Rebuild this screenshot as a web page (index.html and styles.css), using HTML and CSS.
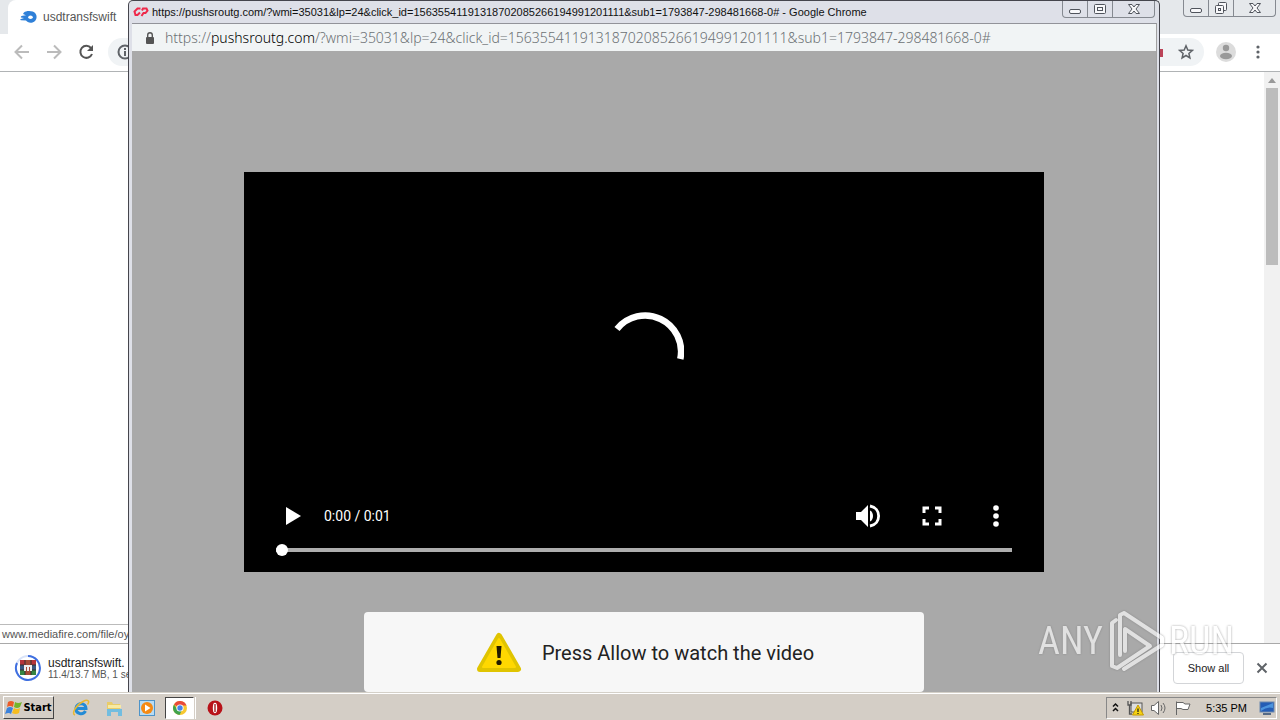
FILE: index.html
```html
<!DOCTYPE html>
<html lang="en">
<head>
<meta charset="utf-8">
<title>Desktop</title>
<link rel="stylesheet" href="styles.css">
</head>
<body>
<div class="desktop">
  <div class="stage">
    <main class="browser">
      <div class="tabstrip">
        <div class="tab">
          <svg width="17" height="14" viewBox="0 0 17 14"><path d="M4 2.500C6 0.500 13 0.300 15.500 3.500C18 7 16 11.500 12.500 12.500C9.500 13.300 7 12 6 10.500L1 10.300C0 10 0 9.200 1 9L4 8L1 7.600C0.500 7 1 6 2.500 5.800L6 5.300L3.500 4.300C3 4 3 3.300 4 2.500Z" fill="#2f80d8"/><ellipse cx="10.500" cy="7.200" rx="2.300" ry="1.800" fill="#fff"/></svg>
          <span>usdtransfswift</span>
        </div>
        <div class="winbtns main-btns">
          <button aria-label="Minimize"><svg width="14" height="14" viewBox="0 0 14 14"><rect x="1.500" y="7.500" width="11" height="4" rx="1.500"/></svg></button>
          <button aria-label="Restore"><svg width="14" height="14" viewBox="0 0 14 14"><rect x="4.500" y="1.500" width="8" height="8" rx="1"/><rect x="1.500" y="4.500" width="8" height="8" rx="1"/><rect x="4.500" y="7.500" width="2" height="2"/></svg></button>
          <button class="wide" aria-label="Close"><svg width="14" height="14" viewBox="0 0 14 14"><path d="M1.500 2.500H5L7 5L9 2.500H12.500L9 7L12.500 11.500H9L7 9L5 11.500H1.500L5 7Z"/></svg></button>
        </div>
      </div>
      <div class="toolbar">
        <button class="icon" aria-label="Back"><svg width="16" height="16" viewBox="0 0 16 16" fill="none" stroke="#bbb" stroke-width="2"><path d="M15 8H2M8 1.500L1.500 8L8 14.500"/></svg></button>
        <button class="icon" aria-label="Forward"><svg width="16" height="16" viewBox="0 0 16 16" fill="none" stroke="#bbb" stroke-width="2"><path d="M1 8H14M8 1.500L14.500 8L8 14.500"/></svg></button>
        <button class="icon" aria-label="Reload"><svg width="16" height="16" viewBox="0 0 16 16"><path d="M13 4A6 6 0 1 0 14 10" fill="none" stroke="#555" stroke-width="2"/><path d="M15 1V7H9Z" fill="#555"/></svg></button>
        <div class="omnibox">
          <svg width="16" height="16" viewBox="0 0 16 16" fill="none" stroke="#5f6368" stroke-width="2"><circle cx="8" cy="8" r="6.500"/><path d="M8 7V12M8 4V6"/></svg>
          <span class="blocked"></span>
          <button class="icon" aria-label="Bookmark this page"><svg width="16" height="16" viewBox="0 0 16 16"><path d="M8 1.800L9.800 6L14.300 6.400L10.900 9.400L11.900 13.900L8 11.500L4.100 13.900L5.100 9.400L1.700 6.400L6.200 6Z" fill="none" stroke="#5f6368" stroke-width="1.500"/></svg></button>
        </div>
        <button class="icon avatar" aria-label="Profile"><svg width="20" height="20" viewBox="0 0 20 20"><circle cx="10" cy="10" r="10" fill="#dcdcdc"/><circle cx="10" cy="6" r="3.200" fill="#999"/><ellipse cx="10" cy="14" rx="6" ry="3.300" fill="#999"/></svg></button>
        <button class="icon" aria-label="Menu"><svg width="16" height="16" viewBox="0 0 16 16" fill="#5f6368"><circle cx="8" cy="3" r="1.600"/><circle cx="8" cy="8" r="1.600"/><circle cx="8" cy="13" r="1.600"/></svg></button>
      </div>
      <div class="page">
        <div class="scrollbar"><svg width="16" height="16" viewBox="0 0 16 16"><path d="M4 11L8 6L12 11Z" fill="#999"/></svg><div class="thumb"></div></div>
        <div class="status">www.mediafire.com/file/oy</div>
      </div>
      <div class="downloads">
        <svg width="28" height="28" viewBox="0 0 28 28"><circle cx="14" cy="14" r="12" fill="none" stroke="#d9e3f8" stroke-width="2"/><path d="M14 2A12 12 0 1 1 3 9" fill="none" stroke="#3f6fe0" stroke-width="2"/><path d="M6 6H22V11H6Z" fill="#b5353b"/><path d="M6 11H22V16H6Z" fill="#38577f"/><path d="M6 16H22V21H6Z" fill="#368443"/><path d="M11 6H17V21H11Z" fill="#a64b38"/><path d="M10 11H18V17H16V13H15V17H13V13H12V17H10Z" fill="#eee"/><path d="M6 11H10M18 11H22M6 16H10M18 16H22M11 6V11M17 6V11M11 17V21M17 17V21" stroke="#333"/></svg>
        <div class="file"><span class="filename">usdtransfswift.</span><span class="progress">11.4/13.7 MB, 1 se</span></div>
        <button class="showall">Show all</button>
        <button class="icon" aria-label="Close downloads"><svg width="12" height="12" viewBox="0 0 12 12"><path d="M1.500 1.500L10.500 10.500M10.500 1.500L1.500 10.500" stroke="#5f6368" stroke-width="2"/></svg></button>
      </div>
    </main>

    <section class="popup">
      <header class="titlebar">
        <svg width="16" height="12" viewBox="0 0 16 12" fill="none" stroke="#ee294b" stroke-width="2"><path d="M7.500 2.500H4.500L1.500 5.500L2.500 9H4.500L7 6.500"/><path d="M8.500 10L10.500 7H12.500L14.500 4.500L13.500 2.500H10L9 4.500"/></svg>
        <h1>https://pushsroutg.com/?wmi=35031&amp;lp=24&amp;click_id=15635541191318702085266194991201111&amp;sub1=1793847-298481668-0# - Google Chrome</h1>
        <div class="winbtns">
          <button aria-label="Minimize"><svg width="14" height="14" viewBox="0 0 14 14"><rect x="1.500" y="7.500" width="11" height="4" rx="1.500"/></svg></button>
          <button aria-label="Maximize"><svg width="14" height="14" viewBox="0 0 14 14"><rect x="1.500" y="2.500" width="11" height="9" rx="1"/><rect x="4.500" y="5.500" width="5" height="3"/></svg></button>
          <button class="wide" aria-label="Close"><svg width="14" height="14" viewBox="0 0 14 14"><path d="M1.500 2.500H5L7 5L9 2.500H12.500L9 7L12.500 11.500H9L7 9L5 11.500H1.500L5 7Z"/></svg></button>
        </div>
      </header>
      <div class="popup-body">
        <div class="address">
          <svg width="10" height="12" viewBox="0 0 10 12"><rect x="1" y="5" width="8" height="7" rx="1" fill="#555"/><path d="M2.700 5V3A2.300 2.300 0 0 1 7.300 3V5" fill="none" stroke="#555" stroke-width="1.400"/></svg>
          <span>https://<b>pushsroutg.com</b>/?wmi=35031&amp;lp=24&amp;click_id=15635541191318702085266194991201111&amp;sub1=1793847-298481668-0#</span>
        </div>
        <div class="content">
          <div class="video">
            <div class="spinner"><svg width="80" height="80" viewBox="0 -1 80 80"><path d="M13 16A36 36 0 0 1 76.300 46" fill="none" stroke="#fff" stroke-width="6.500"/></svg></div>
            <div class="controls">
              <button class="icon" aria-label="Play"><svg width="32" height="32" viewBox="0 0 32 32"><path d="M10 7V25L25 16Z" fill="#fff"/></svg></button>
              <span class="time">0:00 / 0:01</span>
              <button class="icon" aria-label="Mute"><svg width="32" height="32" viewBox="0 0 32 32" fill="#fff"><path d="M4 12H9L16 5V27L9 20H4ZM18 10.500C22 12 22 20 18 21.500Z"/><path d="M18 6C29.500 8 29.500 24 18 26" fill="none" stroke="#fff" stroke-width="2.800"/></svg></button>
              <button class="icon" aria-label="Full screen"><svg width="32" height="32" viewBox="0 0 32 32" fill="none" stroke="#fff" stroke-width="3"><path d="M8 13V8H13M19 8H24V13M24 19V24H19M13 24H8V19"/></svg></button>
              <button class="icon" aria-label="More options"><svg width="32" height="32" viewBox="0 0 32 32" fill="#fff"><circle cx="16" cy="8" r="2.800"/><circle cx="16" cy="16" r="2.800"/><circle cx="16" cy="24" r="2.800"/></svg></button>
            </div>
            <input class="seek" type="range" min="0" max="100" value="0" aria-label="Seek">
          </div>
          <div class="notice">
            <svg width="46" height="42" viewBox="0 0 46 42"><path d="M23 4L42 37H4Z" fill="#e0c400" stroke="#e0c400" stroke-width="6" stroke-linejoin="round"/><path d="M23 7L39 35H7Z" fill="#ffd800" stroke="#ffd800" stroke-width="2" stroke-linejoin="round"/><path d="M20.500 14H25.500L24.500 26H21.500Z" fill="#211a00"/><circle cx="23" cy="30.500" r="2.600" fill="#211a00"/></svg>
            <span>Press Allow to watch the video</span>
          </div>
        </div>
      </div>
    </section>

    <div class="watermark">
      <span>ANY</span>
      <svg width="58" height="64" viewBox="0 0 58 64" fill="none" stroke="#fff" stroke-width="4" stroke-linejoin="round" stroke-linecap="round"><path d="M9 11L5 14V57L10 59L43 37L18 20V42"/><path d="M13 46V6L17 4L55 29V36L17 60"/></svg>
      <span>RUN</span>
    </div>
  </div>

  <footer class="taskbar">
    <button class="start"><svg width="18" height="18" viewBox="0 0 18 18"><path d="M3 3Q6 1 9 3L8 8Q5 6 2 8Z" fill="#ec5b28"/><path d="M10 3Q13 5 17 3L15 8Q12 10 9 8Z" fill="#75b52b"/><path d="M2 9Q5 7 8 9L6 15Q4 13 0 15Z" fill="#3b82dc"/><path d="M9 9Q12 11 15 9L14 14Q11 16 7 14Z" fill="#f6bd20"/></svg>Start</button>
    <nav class="quick">
      <button aria-label="Internet Explorer"><svg width="18" height="18" viewBox="0 0 18 18" fill="none"><path d="M4.500 9.500H14C14 3.500 5 3 4 9C3.500 15 11 16.500 13.500 12" stroke="#238bd5" stroke-width="3"/><path d="M3 16C-1 15 4 6 11 2.500C16 0 18 2 15.500 5.500" stroke="#e8b82f" stroke-width="1.500"/></svg></button>
      <button aria-label="Explorer"><svg width="18" height="18" viewBox="0 0 18 18"><path d="M2 3H7L8 5H15V13H2Z" fill="#e9cc69"/><path d="M3 6H16V9H3Z" fill="#f8eaa3"/><path d="M2 10H17V17H13V13H6V17H2Z" fill="#72bde0"/></svg></button>
      <button aria-label="Media Player"><svg width="18" height="18" viewBox="0 0 18 18"><rect x="1.500" y="1.500" width="15" height="15" fill="#b8dcf4" stroke="#4e94c9"/><circle cx="9" cy="9" r="6" fill="#f58a14"/><path d="M7 5.500V12.500L12.500 9Z" fill="#fff"/></svg></button>
      <button class="active" aria-label="Chrome"><svg width="18" height="18" viewBox="0 0 18 18"><circle cx="9" cy="9" r="7" fill="#f7c832"/><path d="M9 9L3 5.400A7 7 0 0 1 15.500 6.500H9Z" fill="#e84a3b"/><path d="M3 5.400A7 7 0 0 0 8.500 16L11 11L6 10Z" fill="#40a34d"/><circle cx="9" cy="9" r="3.600" fill="#fff"/><circle cx="9" cy="9" r="2.700" fill="#4683ea"/></svg></button>
      <button aria-label="Opera"><svg width="18" height="18" viewBox="0 0 18 18"><circle cx="9" cy="9" r="7.500" fill="#b81219"/><ellipse cx="9" cy="9" rx="2.200" ry="5.200" fill="#fff"/><path d="M9 5V13" stroke="#9b1015" stroke-width="1.300"/></svg></button>
    </nav>
    <div class="tray">
      <svg width="9" height="12" viewBox="0 0 9 12" fill="none" stroke="#111" stroke-width="1.500"><path d="M2 4.500L4.500 2L7 4.500M2 9L4.500 6.500L7 9"/></svg>
      <svg width="18" height="16" viewBox="0 0 18 16"><rect x="5" y="3" width="11" height="9" fill="#ddd" stroke="#555"/><path d="M2 1V5H5V1M3.500 5V14H6" fill="none" stroke="#555" stroke-width="1.300"/><path d="M12 5L17.500 15H6.500Z" fill="#f5d313" stroke="#c79900"/><path d="M12 8.500V12M12 13V14" stroke="#222" stroke-width="1.300"/></svg>
      <svg width="18" height="16" viewBox="0 0 18 16" fill="none" stroke="#666"><path d="M1.500 5.500H4L8.500 1.500V14.500L4 10.500H1.500Z" fill="#fff"/><path d="M11 5Q13 8 11 11M13 3Q17 8 13 13"/></svg>
      <svg width="18" height="16" viewBox="0 0 18 16" fill="#fff" stroke="#666"><path d="M2.500 1.500V15M2.500 2.500H9L11 4H16L14 9.500H9L7 8.500H2.500"/></svg>
      <time>5:35 PM</time>
      <svg width="16" height="14" viewBox="0 0 16 14"><rect x="1" y="1" width="14" height="10" fill="#245db5" stroke="#6a87ad"/><path d="M2 7L14 2V7Q8 5 2 10Z" fill="#4c94dd"/><path d="M4 13H12" stroke="#566a85" stroke-width="2"/></svg>
    </div>
  </footer>
</div>
</body>
</html>
```
FILE: styles.css
```css
* { box-sizing: border-box; }
body { margin: 0; font-family: "Liberation Sans", Roboto, sans-serif; font-size: 11px; color: #222; }
svg { display: block; flex: none; }
button { font: inherit; color: inherit; padding: 0; border: 0; background: none; display: flex; align-items: center; justify-content: center; }
.desktop { height: 100vh; display: flex; flex-direction: column; overflow: hidden; }
.stage { flex: 1; min-height: 0; position: relative; overflow: hidden; }

.browser { height: 100%; display: flex; flex-direction: column; background: #fff; }
.tabstrip { height: 34px; flex: none; display: flex; justify-content: space-between; align-items: flex-start; background: #e5e8eb; }
.tab { height: 34px; width: 240px; margin-left: 8px; padding-left: 12px; display: flex; align-items: center; gap: 6px; background: #fff; border-radius: 8px 8px 0 0; font-size: 12px; color: #555; }
.toolbar { height: 38px; flex: none; display: flex; align-items: center; gap: 16px; padding: 0 14px 2px; border-bottom: 1px solid #b0b3b5; }
.omnibox { flex: 1; height: 28px; margin-left: -2px; padding: 0 10px 0 9px; display: flex; align-items: center; background: #f0f3f5; border-radius: 14px; }
.blocked { width: 7px; height: 8px; margin: 3px 15px 0 auto; background: #bb4358; }
.avatar { margin: 0 -2px 0 -4px; }
.page { flex: 1; min-height: 0; position: relative; display: flex; justify-content: flex-end; }
.scrollbar { width: 16px; background: #f1f1f1; }
.thumb { height: 177px; margin: 0 2px; background: #bcbcbc; }
.status { position: absolute; left: 0; bottom: 0; width: 300px; height: 19px; padding-left: 2px; line-height: 18px; border-top: 1px solid #bbb; background: #fff; color: #555; }
.downloads { height: 49px; flex: none; display: flex; align-items: center; padding: 0 12px 0 14px; border-top: 1px solid #a9a9a9; background: #fff; }
.file { display: flex; flex-direction: column; margin-left: 6px; margin-right: auto; }
.filename { font-size: 12px; line-height: 14px; }
.progress { font-size: 10px; line-height: 10px; color: #555; }
.showall { width: 71px; height: 32px; margin-right: 12px; border: 1px solid #d3d5d8; border-radius: 4px; }

.winbtns { display: flex; flex: none; height: 17px; border: 1px solid #858990; border-top: 0; border-radius: 0 0 4px 4px; }
.winbtns button { width: 25px; height: 16px; border-right: 1px solid #858990; }
.winbtns .wide { width: 41px; border-right: 0; }
.winbtns svg { fill: #f8f8fa; stroke: #50545c; stroke-width: 1; }
.main-btns { margin-right: 4px; }

.popup { position: absolute; top: 0; bottom: 0; left: 128px; right: 120px; display: flex; flex-direction: column; padding: 0 2px 0 3px; border: 1px solid #45454d; border-bottom: 0; border-radius: 5px 5px 0 0; background: #dee0e8; }
.titlebar { height: 22px; flex: none; display: flex; align-items: flex-start; padding: 0 2px 0 1px; }
.titlebar > svg { margin-top: 5px; }
.titlebar h1 { flex: 1; min-width: 0; margin: 0 0 0 3px; overflow: hidden; white-space: nowrap; font-size: 11px; font-weight: 400; line-height: 22px; color: #111; }
.popup-body { flex: 1; min-height: 0; display: flex; flex-direction: column; border-top: 1px solid #929399; border-right: 1px solid #a0a0a0; }
.address { height: 27px; flex: none; display: flex; align-items: center; gap: 10px; padding-left: 13px; background: #f1f4f5; font: 14px "Noto Sans", sans-serif; font-weight: 300; color: #6c7174; white-space: nowrap; }
.address b { font-weight: 300; color: #000; }
.content { flex: 1; min-height: 0; padding-top: 121px; display: flex; flex-direction: column; align-items: center; gap: 40px; background: #a9a9a9; }
.video { position: relative; flex: none; width: 800px; max-width: 100%; height: 400px; display: flex; flex-direction: column; justify-content: flex-end; background: #000; padding: 0 32px 16px; }
.spinner { position: absolute; inset: 0 0 40px; display: flex; align-items: center; justify-content: center; pointer-events: none; }
.controls { height: 48px; display: flex; align-items: center; gap: 32px; color: #fff; }
.time { margin: 0 auto 0 -16px; font: 14px Roboto, sans-serif; }
.seek { appearance: none; width: 736px; max-width: 100%; height: 12px; margin: 4px 0 0; background: linear-gradient(#aeaeae, #aeaeae) center / 100% 4px no-repeat; }
.seek::-webkit-slider-thumb { appearance: none; width: 12px; height: 12px; border-radius: 50%; background: #fff; }
.notice { flex: none; width: 560px; max-width: 100%; height: 80px; padding: 2px 0 0 2px; display: flex; align-items: center; justify-content: center; gap: 20px; background: #f7f7f7; border-radius: 4px; font: 20px Roboto, sans-serif; }

.watermark { position: absolute; right: 46px; bottom: 19px; display: flex; align-items: center; gap: 4px; font: 38px/64px "Liberation Sans Narrow", "Roboto Condensed", sans-serif; color: #fff; opacity: 0.65; filter: drop-shadow(0 0 1px #777); pointer-events: none; }

.taskbar { height: 28px; flex: none; display: flex; align-items: center; padding: 2px 3px 0; border-top: 1px solid #d4d0c8; background: #d4cec6; box-shadow: inset 0 1px #fff; }
.start { width: 51px; height: 23px; border: 1px solid; border-color: #fff #444 #444 #fff; font: bold 11px "DejaVu Sans Condensed", sans-serif; color: #000; }
.quick { display: flex; align-items: center; margin: 0 auto 0 10px; }
.quick button { width: 33px; height: 22px; }
.quick .active { width: 29px; margin: 0 4px 0 2px; background: #fff; border: 1px solid; border-color: #444 #fff #fff #444; box-shadow: 1px 0 #d4cec6, 2px 0 #fff; }
.tray { height: 22px; display: flex; align-items: center; gap: 6px; padding: 0 1px 0 4px; border: 1px solid; border-color: #888 #fff #fff #888; }
.tray time { margin: 0 6px 0 8px; line-height: 18px; color: #000; }
```
